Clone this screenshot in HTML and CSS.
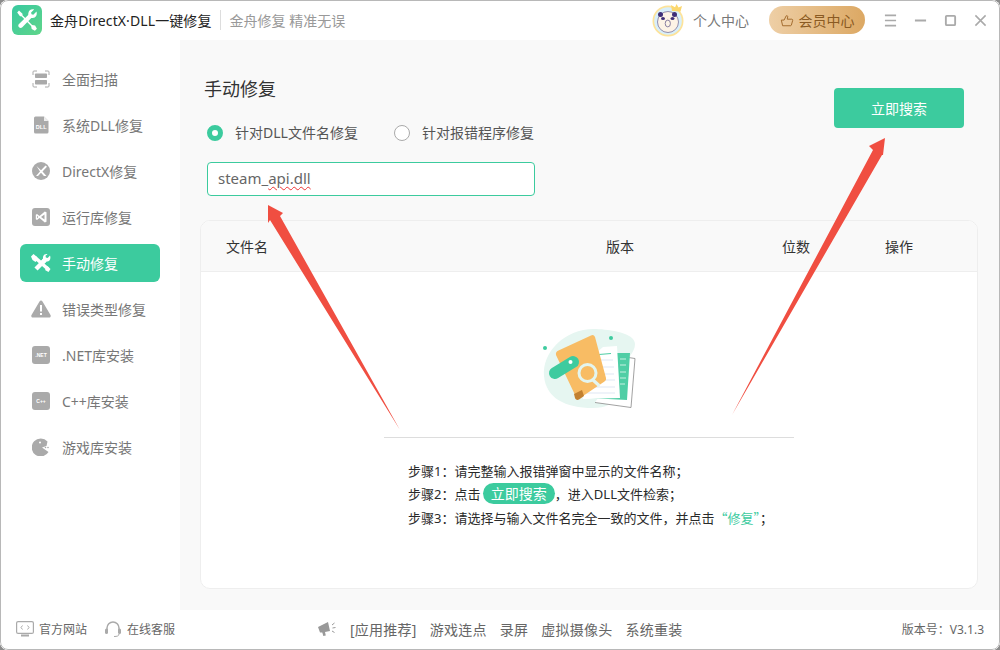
FILE: index.html
```html
<!DOCTYPE html>
<html lang="zh-CN">
<head>
<meta charset="utf-8">
<title>金舟DirectX·DLL一键修复</title>
<link rel="stylesheet" href="styles.css">
</head>
<body>
<div class="window">
  <header class="topbar">
    <div class="brand">
      <svg class="logo" viewBox="0 0 30 30"><defs><linearGradient id="lg" x1="0" y1="0" x2="1" y2="1"><stop offset="0" stop-color="#38c9a0"/><stop offset="1" stop-color="#5fd58a"/></linearGradient></defs><rect width="30" height="30" rx="6" fill="url(#lg)"/><path d="M7 5.500l3.500 3.200v1.600l9.600 9.600 3 .6 1.800 3.200-2 2-3.200-1.800-.6-3-9.600-9.600H8L5.200 7.500z" fill="#fff"/><path d="M24.500 6.500l-3.200 3.200-1.800-.4-.4-1.800 3-3c-2.600-.8-5.600.8-5.800 4l-.1 1.500-9.200 9c-1 1-.9 2.400 0 3.300.9.900 2.300 1 3.300 0l9-9.200 1.500-.1c3-.2 4.700-3.100 3.700-6.500z" fill="#fff"/></svg>
      <span class="app-name">金舟DirectX·DLL一键修复</span>
      <span class="brand-sep"></span>
      <span class="slogan">金舟修复 精准无误</span>
    </div>
    <div class="top-actions">
      <svg class="avatar" viewBox="0 0 34 36"><g transform="translate(0 -1)"><circle cx="16" cy="20" r="15.500" fill="#fde39a"/><circle cx="16" cy="20" r="13.800" fill="#d8effa"/><circle cx="16" cy="21" r="10.500" fill="#fdf3e6" stroke="#6d6390" stroke-width=".7"/><circle cx="8.500" cy="13.500" r="2.500" fill="#3f2f78"/><circle cx="22.500" cy="13.500" r="2.500" fill="#3f2f78"/><ellipse cx="11" cy="17.500" rx="2" ry="1.600" fill="#3f2f78"/><ellipse cx="20.500" cy="17.500" rx="2" ry="1.600" fill="#3f2f78"/><ellipse cx="15.800" cy="22.500" rx="2.600" ry="3.400" fill="#fdf3e6" stroke="#6d6390" stroke-width=".8"/><path d="M20 10l-1-6 4 2.500 1.500-3.500 2 3.500 3.500-1.500-1.500 5.500z" fill="#fbd76e"/></g></svg>
      <span class="user-link">个人中心</span>
      <button class="vip">
        <svg class="vip-icon" viewBox="0 0 16 14"><path d="M1.500 6.500h3.200L7 1.800c.8-.8 2-.2 1.800 1L8.300 5.500h5.200c.8 0 1.200.7 1 1.400l-1.500 5.300c-.2.500-.5.800-1 .8H3l-1.500-6.500z" fill="none" stroke="#a0692c" stroke-width="1.100"/></svg>
        会员中心
      </button>
      <div class="win-buttons">
        <svg class="win-icon" viewBox="0 0 14 14"><path d="M1 1.500h12M1 7h12M1 12.500h12" stroke="#aaa" stroke-width="1.800" fill="none"/></svg>
        <svg class="win-icon" viewBox="0 0 14 14"><path d="M1 7h12" stroke="#aaa" stroke-width="2" fill="none"/></svg>
        <svg class="win-icon" viewBox="0 0 14 14"><rect x="2" y="2" width="10" height="10" rx="1" stroke="#aaa" stroke-width="2" fill="none"/></svg>
        <svg class="win-icon" viewBox="0 0 14 14"><path d="M1.500 1.500l11 11M12.500 1.500l-11 11" stroke="#aaa" stroke-width="1.700" fill="none"/></svg>
      </div>
    </div>
  </header>

  <div class="body">
    <nav class="sidebar">
      <a class="nav-item"><svg class="nav-icon" viewBox="0 0 18 18"><path d="M1 5V2a1 1 0 0 1 1-1h3M13 1h3a1 1 0 0 1 1 1v3M17 13v3a1 1 0 0 1-1 1h-3M5 17H2a1 1 0 0 1-1-1v-3" fill="none" stroke="#aaa" stroke-width="1"/><rect x="3" y="3.500" width="12" height="4.500" rx=".8" fill="#aaa"/><rect x="3" y="10" width="12" height="4.500" rx=".8" fill="#aaa"/></svg>全面扫描</a>
      <a class="nav-item"><svg class="nav-icon" viewBox="0 0 18 18"><path d="M2 2a1.500 1.500 0 0 1 1.500-1.500H12L16.500 5v11a1.500 1.500 0 0 1-1.500 1.500H3.500A1.500 1.500 0 0 1 2 16z" fill="#aaa"/><path d="M12 .5V5h4.500z" fill="#eee"/><text x="9.200" y="12.500" class="icon-text" font-size="5.500">DLL</text></svg>系统DLL修复</a>
      <a class="nav-item"><svg class="nav-icon" viewBox="0 0 18 18"><circle cx="9" cy="9" r="9" fill="#aaa"/><path d="M4.500 4l4.500 4.200L13.500 3.500l1.500 1.200L10.500 9.500l4 4.500h-2.600L9 10.800 6 14H4l4-4.600z" fill="#fff"/></svg>DirectX修复</a>
      <a class="nav-item"><svg class="nav-icon" viewBox="0 0 18 18"><rect width="18" height="18" rx="3" fill="#aaa"/><path d="M12.800 3.500L7.500 8 5 6l-1.200.7v4.600L5 12l2.500-2 5.300 4.500 1.700-.8V4.300zM12.500 6.500v5L9 9zM5 7.800L6.300 9 5 10.200z" fill="#fff"/></svg>运行库修复</a>
      <a class="nav-item active"><svg class="nav-icon wide" viewBox="0 0 20 18"><path d="M4 3.500L17 15" stroke="#fff" stroke-width="3.600" fill="none"/><path d="M0 2.500L2.500 0l3 2.500L7 5.500 4.500 8 1.500 6z" fill="#fff"/><path d="M14 16l2.500-4 3 3-2 3z" fill="#fff"/><path d="M14 6L5 15" stroke="#fff" stroke-width="4.400" fill="none"/><path d="M19 1.500l-2.300 2.500-1.800-.5-.4-1.800L16.500.2C13.800-.4 11.500 1.600 12 4.500L10 7l3.500 2.500 2-2c2.800.6 4.800-2.500 3.500-6z" fill="#fff"/></svg>手动修复</a>
      <a class="nav-item"><svg class="nav-icon wide" viewBox="0 0 20 18"><path d="M8.500 1.500c.7-1.200 2.300-1.200 3 0l8 13.500c.7 1.200-.1 2.500-1.500 2.500H2c-1.400 0-2.200-1.300-1.500-2.500z" fill="#aaa"/><rect x="9" y="5" width="2" height="6.500" fill="#fff"/><rect x="9" y="13" width="2" height="2" fill="#fff"/></svg>错误类型修复</a>
      <a class="nav-item"><svg class="nav-icon" viewBox="0 0 18 18"><rect width="18" height="18" rx="3" fill="#aaa"/><text x="9" y="11" class="icon-text" font-size="5">.NET</text></svg>.NET库安装</a>
      <a class="nav-item"><svg class="nav-icon" viewBox="0 0 18 18"><rect width="18" height="18" rx="3" fill="#aaa"/><text x="9" y="11" class="icon-text" font-size="5">C++</text></svg>C++库安装</a>
      <a class="nav-item"><svg class="nav-icon" viewBox="0 0 18 18"><path d="M15.500 3.500A9 9 0 1 0 16.500 14L10 9.500 14.500 8z" fill="#aaa"/><circle cx="8" cy="4.500" r="1" fill="#fff"/><circle cx="13.500" cy="9.500" r=".8" fill="#aaa"/><circle cx="16" cy="9.500" r=".8" fill="#aaa"/></svg>游戏库安装</a>
    </nav>

    <main class="content">
      <div class="form-head">
        <div class="form-left">
          <h1 class="title">手动修复</h1>
          <div class="radios">
            <label class="radio"><span class="dot on"></span>针对DLL文件名修复</label>
            <label class="radio"><span class="dot"></span>针对报错程序修复</label>
          </div>
          <div class="input"><span class="input-value">steam_<span class="spell">api.dll</span></span></div>
        </div>
        <button class="search">立即搜索</button>
      </div>

      <section class="card">
        <div class="thead"><span>文件名</span><span>版本</span><span>位数</span><span>操作</span></div>
        <div class="empty">
          <svg class="illus" viewBox="0 0 130 100">
            <path d="M24 56C22 32 45 8 76 9c14 .5 39 4 39 15 0 9-9 13-8 24 1 22-9 40-34 40C45 88 26 78 24 56z" fill="#e6f6f1"/>
            <circle cx="25" cy="28" r="2" fill="#3ecb9f"/><circle cx="91" cy="18" r="2" fill="#3ecb9f"/>
            <path d="M105 37l10 1.500-4 49-36-5" fill="#fff" stroke="#8a8a8a" stroke-width=".8"/>
            <path d="M90 33l20 0-3 47-38-2z" fill="#4fcea5"/>
            <path d="M100 39h6M100 45h6M100 52h6M100 58h6M100 64h5" stroke="#c9f0e2" stroke-width="1"/>
            <path d="M83 27l14-1 3 52-37 1-6-30z" fill="#fff"/>
            <path d="M79 34.500l12-1" stroke="#4fcea5" stroke-width="1.200"/>
            <path d="M80 40h13M79 47h15M78 54h16M79 60h16M72 67h23M64 73h31" stroke="#dfe7f3" stroke-width="1"/>
            <path d="M36 35a4 4 0 0 1 2.500-4.500L71 15.500a3 3 0 0 1 4 1.500L86 58a3 3 0 0 1-1.500 3.500L60 78a3 3 0 0 1-4-1z" fill="#f8bc64"/>
            <path d="M54 74l8-4 2 6-5 3.500c-2 1-3.500 0-4-1.500z" fill="#c28030"/>
            <path d="M35 53l18-11" stroke="#3ecb9f" stroke-width="12" stroke-linecap="round"/>
            <circle cx="50.500" cy="42" r="2" fill="#fff"/>
            <circle cx="67.500" cy="53" r="8.500" fill="#f8bc64" stroke="#e3f5ef" stroke-width="3"/>
            <path d="M73 60l5.500 5" stroke="#e3f5ef" stroke-width="3.200" stroke-linecap="round"/>
          </svg>
          <div class="guide">
            <p class="step">步骤1：请完整输入报错弹窗中显示的文件名称；</p>
            <p class="step">步骤2：点击 <span class="pill">立即搜索</span>，进入DLL文件检索；</p>
            <p class="step">步骤3：请选择与输入文件名完全一致的文件，并点击<em class="hl">“修复”</em>；</p>
          </div>
        </div>
      </section>
    </main>
  </div>

  <footer class="footer">
    <div class="foot-left">
      <span class="foot-link"><svg class="foot-icon" viewBox="0 0 18 16"><rect x=".6" y=".6" width="16.800" height="11.800" rx="1.500" fill="none" stroke="#aaa" stroke-width="1.200"/><path d="M6.500 4.500L5 6.500l1.500 2M11.500 4.500L13 6.500l-1.500 2" fill="none" stroke="#aaa"/><path d="M5 14.500h8" stroke="#aaa" stroke-width="2"/></svg>官方网站</span>
      <span class="foot-link"><svg class="foot-icon" viewBox="0 0 18 18"><path d="M3 10V8a6 6 0 0 1 12 0v2" fill="none" stroke="#aaa" stroke-width="1.500"/><rect x="1" y="8.500" width="3" height="5.500" rx="1.500" fill="#aaa"/><rect x="14" y="8.500" width="3" height="5.500" rx="1.500" fill="#aaa"/><path d="M15 14c0 2-2 2.500-5 2.500" fill="none" stroke="#aaa"/></svg>在线客服</span>
    </div>
    <div class="foot-mid">
      <svg class="horn" viewBox="0 0 20 16"><path d="M1 6l10-5 2 9-5 1 .8 3.500-2.500.5-1-3.500L3 11.500z" fill="#999"/><path d="M15 4l2.500-2M15.500 7l3-.5M15 10l2.500 1.500" stroke="#999" fill="none"/></svg>
      <span class="tag">[应用推荐]</span><span class="tag">游戏连点</span><span class="tag">录屏</span><span class="tag">虚拟摄像头</span><span class="tag">系统重装</span>
    </div>
    <span class="version">版本号：V3.1.3</span>
  </footer>

  <svg class="arrows" viewBox="0 0 1000 650">
    <path d="M268 205l15 8-3 3L400 430 270 220l-2 3z" fill="#f04e41"/>
    <path d="M885 138l-16 8 4 4L732 415l150-260 1 0z" fill="#f04e41"/>
  </svg>
</div>
</body>
</html>
```
FILE: styles.css
```css
* { box-sizing: border-box; }
html, body { margin: 0; height: 100%; background: #8c8c8c; }
body { font-family: "Noto Sans", "Noto Sans CJK SC", sans-serif; }
.window { position: relative; width: 1000px; height: 650px; display: flex; flex-direction: column; background: #fff; border-radius: 8px; overflow: hidden; color: #333; }
.window::after { content: ""; position: absolute; inset: 0; border: 1px solid #b8b8b8; border-radius: 8px; pointer-events: none; }
.topbar { height: 40px; flex: none; display: flex; align-items: center; justify-content: space-between; padding: 0 13px 0 12px; background: #fff; }
.brand { display: flex; align-items: center; }
.logo { width: 30px; height: 30px; margin-right: 8px; }
.app-name { font-size: 14px; color: #222; letter-spacing: .1px; }
.brand-sep { width: 1px; height: 20px; background: #ddd; margin: 0 9px 0 8px; }
.slogan { font-size: 14px; color: #999; }
.top-actions { display: flex; align-items: center; }
.avatar { width: 34px; height: 36px; margin-right: 7px; }
.user-link { font-size: 14px; color: #777; margin-right: 20px; }
.vip { height: 28px; width: 96px; border: 0; border-radius: 14px; padding: 0; display: flex; align-items: center; justify-content: center; gap: 5px; font: inherit; font-size: 14px; color: #8a5a22; background: linear-gradient(90deg, #eecfa6, #dca863); }
.vip-icon { width: 14px; height: 13px; }
.win-buttons { display: flex; align-items: center; gap: 17px; margin-left: 19px; }
.win-icon { width: 13px; height: 13px; display: block; }
.body { flex: 1; display: flex; min-height: 0; }
.sidebar { width: 180px; flex: none; padding: 20px 20px 0; background: #fff; display: flex; flex-direction: column; gap: 8px; }
.nav-item { height: 38px; display: flex; align-items: center; padding-left: 12px; border-radius: 6px; font-size: 14px; color: #777; }
.nav-icon { width: 18px; height: 18px; margin-right: 12px; flex: none; }
.nav-icon.wide { width: 20px; margin-left: -1px; margin-right: 11px; }
.icon-text { font-family: "Liberation Sans", sans-serif; font-weight: 700; fill: #fff; text-anchor: middle; }
.nav-item.active { background: #3ccb9e; color: #fff; }
.content { flex: 1; min-width: 0; background: #f9f9f9; padding: 0 22px 21px 20px; display: flex; flex-direction: column; }
.form-head { height: 180px; flex: none; display: flex; justify-content: space-between; align-items: flex-start; }
.form-left { padding: 36px 0 0 5px; }
.title { margin: 0 0 0 -1px; font-size: 18px; font-weight: 400; line-height: 26px; color: #333; }
.radios { display: flex; gap: 36px; margin: 21px 0 0 2px; }
.radio { display: flex; align-items: center; font-size: 14px; line-height: 20px; color: #555; }
.dot { width: 16px; height: 16px; border-radius: 50%; border: 1px solid #aaa; background: #fff; margin-right: 12px; }
.dot.on { border: 5px solid #3ccb9e; }
.input { width: 328px; height: 34px; margin: 19px 0 0 2px; padding: 0 0 2px 10px; display: flex; align-items: center; background: #fff; border: 1px solid #3ccb9e; border-radius: 4px; font-size: 15px; color: #666; }
.spell { text-decoration: underline wavy #e33; text-decoration-thickness: 1px; text-underline-offset: 2px; }
.search { width: 130px; height: 40px; margin: 48px 14px 0 0; border: 0; border-radius: 4px; background: #3ccb9e; color: #fff; font: inherit; font-size: 14px; }
.card { flex: 1; min-height: 0; background: #fff; border: 1px solid #eee; border-radius: 10px; overflow: hidden; }
.thead { height: 51px; display: grid; grid-template-columns: 380px 176px 103px 1fr; align-items: center; padding-left: 25px; background: #f9f9f9; border-bottom: 1px solid #eee; font-size: 14px; color: #333; }
.empty { display: flex; flex-direction: column; align-items: center; padding-top: 48px; }
.illus { width: 130px; height: 100px; display: block; margin-right: 8px; }
.guide { width: 410px; margin-top: 17px; padding: 22px 0 0 24px; border-top: 1px solid #ddd; }
.step { margin: 0; height: 23px; line-height: 23px; font-size: 13px; color: #2a2a2a; white-space: nowrap; }
.pill { display: inline-block; height: 21px; line-height: 21px; margin-left: -1px; padding: 0 8px; border-radius: 11px; background: #3ccb9e; color: #fff; font-size: 14px; }
.hl { font-style: normal; color: #3ccb9e; font-family: "Noto Sans CJK SC", sans-serif; }
.footer { height: 40px; flex: none; display: flex; align-items: center; padding: 0 16px 2px; background: #fff; position: relative; }
.foot-left { display: flex; gap: 17px; width: 301px; }
.foot-link { display: flex; align-items: center; font-size: 12px; color: #666; }
.foot-icon { width: 18px; height: 18px; margin-right: 5px; }
.foot-mid { display: flex; align-items: center; flex: 1; }
.horn { width: 20px; height: 16px; margin-right: 13px; }
.tag { font-size: 14px; letter-spacing: .25px; color: #666; margin-right: 13px; }
.version { font-size: 12px; color: #666; }
.arrows { position: absolute; left: 0; top: 0; width: 1000px; height: 650px; pointer-events: none; }
```
